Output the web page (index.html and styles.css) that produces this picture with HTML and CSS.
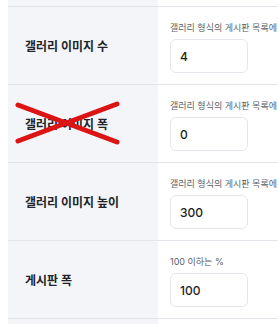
FILE: index.html
```html
<!DOCTYPE html>
<html lang="ko">
<head>
<meta charset="utf-8">
<link rel="stylesheet" href="styles.css">
</head>
<body>
<div class="table">
  <div class="row row-partial">
    <div class="label"></div>
    <div class="value"></div>
  </div>
  <div class="row">
    <div class="label">갤러리 이미지 수</div>
    <div class="value">
      <p class="desc">갤러리 형식의 게시판 목록에 표시할 이미지 수</p>
      <input class="field" type="text" value="4">
    </div>
  </div>
  <div class="row">
    <div class="label">갤러리 이미지 폭</div>
    <div class="value">
      <p class="desc">갤러리 형식의 게시판 목록에 표시할 이미지 폭</p>
      <input class="field" type="text" value="0">
    </div>
  </div>
  <div class="row">
    <div class="label">갤러리 이미지 높이</div>
    <div class="value">
      <p class="desc">갤러리 형식의 게시판 목록에 표시할 이미지 높이</p>
      <input class="field" type="text" value="300">
    </div>
  </div>
  <div class="row">
    <div class="label">게시판 폭</div>
    <div class="value">
      <p class="desc">100 이하는 %</p>
      <input class="field" type="text" value="100">
    </div>
  </div>
  <div class="row row-partial">
    <div class="label"></div>
    <div class="value"></div>
  </div>
</div>
<svg class="cross" width="278" height="324" viewBox="0 0 278 324">
  <line x1="18" y1="105" x2="117" y2="142"/>
  <line x1="18" y1="141" x2="117" y2="104"/>
</svg>
</body>
</html>
```

FILE: styles.css
```css
html, body {
  margin: 0;
  padding: 0;
  background: #ffffff;
  overflow: hidden;
  width: 278px;
  height: 324px;
  font-family: "Inter", "Noto Sans CJK KR", sans-serif;
}

body {
  position: relative;
}

.table {
  margin-left: 8px;
  width: 420px;
}

.row {
  display: grid;
  grid-template-columns: 150px 1fr;
  border-bottom: 1px solid #e1e4e9;
}

.row-partial {
  height: 6px;
}

.label {
  background: #f3f5f9;
  padding-left: 17px;
  display: flex;
  align-items: center;
  font-size: 12px;
  font-weight: 700;
  color: #222428;
}

.value {
  padding: 14px 0 11px 12px;
  display: flex;
  flex-direction: column;
  gap: 4px;
  min-width: 0;
}

.row-partial .value {
  padding: 0;
}

.desc {
  margin: 0;
  font-size: 9px;
  line-height: 14px;
  color: #5b5f66;
  white-space: nowrap;
}

.field {
  box-sizing: border-box;
  width: 78px;
  height: 34px;
  margin: 0;
  padding: 0 9px;
  border: 1px solid #e3e6eb;
  border-radius: 6px;
  background: #ffffff;
  font-family: "Inter", "Noto Sans CJK KR", sans-serif;
  font-size: 12px;
  font-weight: 500;
  color: #1c1d20;
  outline: none;
}

.cross {
  position: absolute;
  left: 0;
  top: 0;
  pointer-events: none;
}

.cross line {
  stroke: #dc1414;
  stroke-width: 5;
  stroke-linecap: round;
}
```
